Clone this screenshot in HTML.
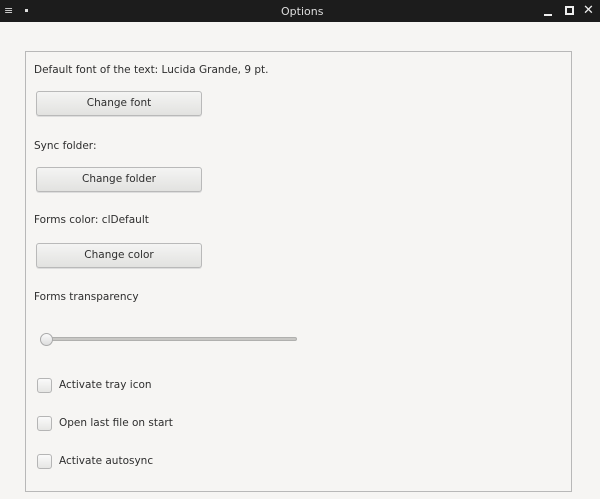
<!DOCTYPE html><html><head><style>
body{margin:0;width:600px;height:499px;background:#f6f5f3;font-family:"DejaVu Sans","Liberation Sans",sans-serif;font-size:10.5px;color:#2e2e2e;position:relative;overflow:hidden}
.t{position:absolute;left:0;top:0;width:600px;height:22px;background:#1c1c1c;color:#ddd}
.p{position:absolute;left:25px;top:51px;width:547px;height:441px;border:1px solid #b8b8b8;box-sizing:border-box}
.a{position:absolute;white-space:nowrap}
.b{position:absolute;left:36px;width:166px;height:25px;box-sizing:border-box;border:1px solid #b9b9b9;border-radius:3px;background:linear-gradient(#f4f4f3,#e2e2e0);text-align:center;line-height:23px;box-shadow:0 1px 0 #ddd}
.c{position:absolute;left:37px;width:15px;height:15px;box-sizing:border-box;border:1px solid #b5b5b5;border-radius:3px;background:linear-gradient(#fafafa,#e6e6e4)}
</style></head><body>
<div class="t"><span class="a" style="left:4px;top:4px;font-size:11px">≡</span><span class="a" style="left:25px;top:9px;width:3px;height:3px;background:#ddd"></span>
<span class="a" style="left:281px;top:5px;font-size:11px">Options</span>
<span class="a" style="left:544px;top:14px;width:8px;height:2px;background:#eee"></span>
<span class="a" style="left:565px;top:6px;border:2px solid #eee;box-sizing:content-box;width:5px;height:5px"></span>
<span class="a" style="left:583px;top:3px;font-size:13px;font-weight:bold;color:#eee">✕</span></div>
<div class="p"></div>
<span class="a" style="left:34px;top:64px">Default font of the text: Lucida Grande, 9 pt.</span>
<div class="b" style="top:91px">Change font</div>
<span class="a" style="left:34px;top:140px">Sync folder:</span>
<div class="b" style="top:167px">Change folder</div>
<span class="a" style="left:34px;top:214px">Forms color: clDefault</span>
<div class="b" style="top:243px">Change color</div>
<span class="a" style="left:34px;top:291px">Forms transparency</span>
<div class="a" style="left:40px;top:337px;width:257px;height:4px;border-radius:2px;background:#c8c7c4;border:1px solid #b0b0ae;box-sizing:border-box"></div>
<div class="a" style="left:40px;top:333px;width:13px;height:13px;border-radius:50%;background:linear-gradient(#fafafa,#ddd);border:1px solid #aaa;box-sizing:border-box"></div>
<div class="c" style="top:378px"></div><span class="a" style="left:59px;top:379px">Activate tray icon</span>
<div class="c" style="top:416px"></div><span class="a" style="left:59px;top:417px">Open last file on start</span>
<div class="c" style="top:454px"></div><span class="a" style="left:59px;top:455px">Activate autosync</span>
</body></html>
